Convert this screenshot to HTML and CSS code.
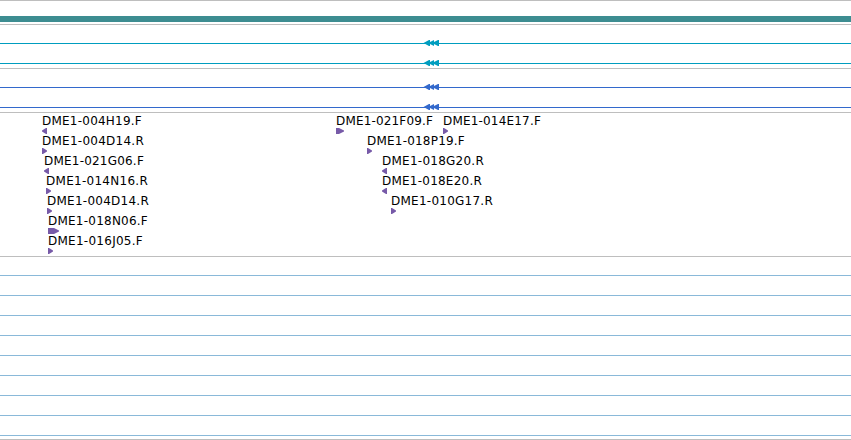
FILE: index.html
```
<!DOCTYPE html>
<html lang="en">
<head>
    <meta charset="UTF-8">
    <title>Genome Tracks</title>
    <link rel="stylesheet" href="styles.css">
</head>
<body>
    <div class="tracks">
        <div class="track">
            <div class="lane"><div class="contig"></div></div>
        </div>
        <div class="track gene" id="genes"></div>
        <div class="track transcript" id="transcripts"></div>
        <div class="track clones" id="clones"></div>
        <div class="track empty" id="empty"></div>
    </div>
    <script src="tracks.js"></script>
</body>
</html>
```
FILE: styles.css
```
body {
    margin: 0;
    background: white;
    font-family: "DejaVu Sans", sans-serif;
    overflow: hidden;
}
.tracks {
    border-bottom: 1px solid #bebebe;
}
.track {
    border-top: 1px solid #bebebe;
    padding-bottom: 3px;
}
.lane {
    position: relative;
    height: 20px;
    box-sizing: border-box;
}
.contig {
    position: absolute;
    top: 15px;
    width: 100%;
    height: 6px;
    background: #3d8d91;
}
.axis {
    position: absolute;
    top: 18px;
    width: 100%;
    height: 1px;
    background: currentColor;
}
.gene {
    color: #009dbf;
}
.transcript {
    color: #3369cc;
}
.empty {
    color: #8ab9d9;
    padding-bottom: 2px;
}
.exons {
    position: absolute;
    top: 15px;
    fill: currentColor;
}
.clone {
    position: absolute;
    top: 0;
}
.label {
    display: block;
    height: 15px;
    line-height: 16px;
    font-size: 12px;
    color: black;
    white-space: nowrap;
}
.marker {
    display: block;
    fill: #775aa8;
}
```
FILE: tracks.js
```
// one array per lane: name, label start, marker shape, label width
const clones = [
    [["DME1-004H19.F", 42, "left", 100], ["DME1-021F09.F", 336, "wide", 97], ["DME1-014E17.F", 443, "right", 98]],
    [["DME1-004D14.R", 42, "right", 102], ["DME1-018P19.F", 367, "right", 98]],
    [["DME1-021G06.F", 44, "left", 100], ["DME1-018G20.R", 382, "left", 102]],
    [["DME1-014N16.R", 46, "right", 102], ["DME1-018E20.R", 382, "left", 100]],
    [["DME1-004D14.R", 47, "right", 102], ["DME1-010G17.R", 391, "right", 102]],
    [["DME1-018N06.F", 48, "long", 100]],
    [["DME1-016J05.F", 48, "right", 95]]
];

const markers = {
    left: "M5 0V6H4L0 3.5V2.5L4 0Z",
    right: "M0 0V6H1L5 3.5V2.5L1 0Z",
    wide: "M0 0H3L8 2.5V3.5L3 6H0Z",
    long: "M0 0H6L11 2.5V3.5L6 6H0Z"
};

const exons = `<svg class="exons" style="left:423px" width="16" height="6">
    <path d="M0.5 3L6 0H7V2L11 0V2L15 0H16V6H15L11 4V6L7 4V6H6Z"/></svg>`;

function drawAxes(id, count, features) {
    document.getElementById(id).innerHTML =
        `<div class="lane"><div class="axis"></div>${features}</div>`.repeat(count);
}

drawAxes("genes", 2, exons);
drawAxes("transcripts", 2, exons);
drawAxes("empty", 9, "");

document.getElementById("clones").innerHTML = clones.map(lane =>
    `<div class="lane">${lane.map(([name, start, shape]) =>
        `<div class="clone" style="left:${start}px"><span class="label">${name}</span>
        <svg class="marker" width="12" height="6"><path d="${markers[shape]}"/></svg></div>`).join("")}</div>`
).join("");

// fit each label to its width on the axis
const labels = document.querySelectorAll(".label");
clones.flat().forEach(([name, start, shape, width], i) => {
    const spacing = (width - labels[i].getBoundingClientRect().width) / name.length;
    labels[i].style.letterSpacing = spacing + "px";
});
```
